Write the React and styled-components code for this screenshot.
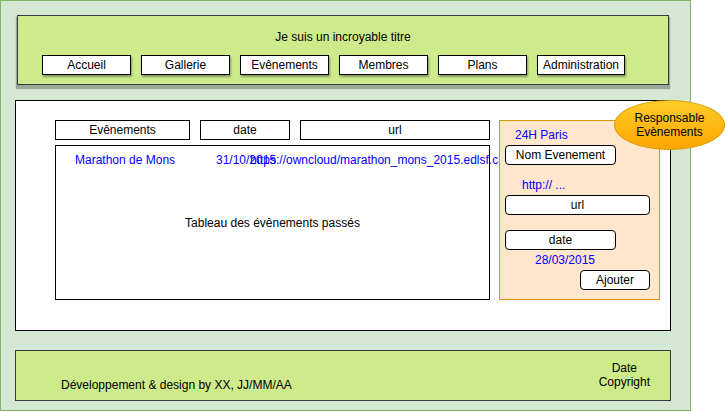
import React from "react";
import styled, { createGlobalStyle } from "styled-components";

const Global = createGlobalStyle`
  html, body { margin: 0; padding: 0; background: #ffffff; }
  body { font-family: "Liberation Sans", Arial, Helvetica, sans-serif; font-size: 12px; color: #000; }
  * { box-sizing: border-box; }
`;

const Frame = styled.div`
  width: 691px;
  height: 411px;
  border: 1px solid #82b366;
  background: #d5e8d4;
  padding: 14px 19px 0 14px;
  display: flex;
  flex-direction: column;
`;

const Header = styled.header`
  height: 70px;
  margin: 0 2px 0 2px;
  border: 1px solid #36393d;
  background: #cdeb8b;
  box-shadow: 0 3px 1px 1px rgba(0, 0, 0, 0.28);
  padding: 14px 0 0 24px;
  display: flex;
  flex-direction: column;
`;

const Title = styled.div`
  line-height: 14px;
  text-align: center;
  padding-right: 24px;
`;

const Nav = styled.nav`
  margin-top: 11px;
  display: flex;
  gap: 10px;
`;

const NavButton = styled.div`
  width: ${(p) => p.$w || 89}px;
  height: 20px;
  background: #ffffff;
  border: 1px solid #000;
  box-shadow: 1px 2px 2px rgba(0, 0, 0, 0.35);
  display: flex;
  align-items: center;
  justify-content: center;
  line-height: 14px;
`;

const Main = styled.main`
  position: relative;
  margin-top: 15px;
  height: 231px;
  border: 1px solid #000;
  background: #ffffff;
  padding: 19px 0 0 39px;
  display: flex;
  gap: 9px;
  align-items: flex-start;
`;

const LeftCol = styled.div`
  width: 435px;
  display: flex;
  flex-direction: column;
  gap: 5px;
`;

const ColHeaders = styled.div`
  display: flex;
  gap: 10px;
`;

const ColHeader = styled.div`
  width: ${(p) => p.$w}px;
  height: 20px;
  border: 1px solid #000;
  background: #fff;
  display: flex;
  align-items: center;
  justify-content: center;
  line-height: 14px;
`;

const Table = styled.div`
  height: 155px;
  border: 1px solid #000;
  background: #fff;
  padding: 7px 0 0 19px;
  display: flex;
  flex-direction: column;
`;

const Row = styled.div`
  display: flex;
  line-height: 14px;
  color: #0000ff;
  white-space: nowrap;
`;

const Cell = styled.span`
  flex: 0 0 ${(p) => (p.$w ? `${p.$w}px` : "auto")};
  min-width: 0;
  overflow: visible;
`;

const Caption = styled.div`
  margin-top: 49px;
  margin-left: -19px;
  text-align: center;
  line-height: 14px;
`;

const Panel = styled.aside`
  position: relative;
  z-index: 1;
  width: 161px;
  height: 180px;
  border: 1px solid #d79b00;
  background: #ffe6cc;
  padding: 7px 0 0 5px;
  display: flex;
  flex-direction: column;
  align-items: flex-start;
`;

const BlueText = styled.div`
  color: #0000ff;
  line-height: 14px;
  margin-top: ${(p) => p.$mt || 0}px;
  margin-left: ${(p) => p.$ml || 0}px;
  width: ${(p) => (p.$w ? `${p.$w}px` : "auto")};
  text-align: ${(p) => p.$align || "left"};
`;

const Field = styled.div`
  width: ${(p) => p.$w}px;
  height: 20px;
  margin-top: ${(p) => p.$mt || 0}px;
  margin-left: ${(p) => p.$ml || 0}px;
  border: 1px solid #000;
  border-radius: 4px;
  background: #ffffff;
  display: flex;
  align-items: center;
  justify-content: center;
  line-height: 14px;
`;

const Badge = styled.div`
  position: absolute;
  left: 598px;
  top: -1px;
  width: 111px;
  height: 50px;
  border-radius: 50%;
  border: 1px solid #d79b00;
  background: linear-gradient(to bottom, #ffcd28, #ffa500);
  z-index: 2;
  display: flex;
  flex-direction: column;
  align-items: center;
  justify-content: center;
  line-height: 14px;
  text-align: center;
`;

const Footer = styled.footer`
  margin-top: 19px;
  height: 51px;
  border: 1px solid #36393d;
  background: #cdeb8b;
  display: flex;
  justify-content: space-between;
  padding: 0 20px 0 45px;
`;

const Credits = styled.div`
  align-self: flex-end;
  padding-bottom: 8px;
  line-height: 14px;
`;

const Copy = styled.div`
  align-self: flex-start;
  padding-top: 10px;
  line-height: 14px;
  text-align: center;
`;

const navItems = [
  ["Accueil", 89],
  ["Gallerie", 89],
  ["Evênements", 89],
  ["Membres", 89],
  ["Plans", 89],
  ["Administration", 88],
];

export default function App() {
  return (
    <>
      <Global />
      <Frame>
        <Header>
          <Title>Je suis un incroyable titre</Title>
          <Nav>
            {navItems.map(([label, w]) => (
              <NavButton key={label} $w={w}>
                {label}
              </NavButton>
            ))}
          </Nav>
        </Header>

        <Main>
          <LeftCol>
            <ColHeaders>
              <ColHeader $w={135}>Evênements</ColHeader>
              <ColHeader $w={90}>date</ColHeader>
              <ColHeader $w={190}>url</ColHeader>
            </ColHeaders>
            <Table>
              <Row>
                <Cell $w={141}>Marathon de Mons</Cell>
                <Cell $w={34}>31/10/2015</Cell>
                <Cell>https://owncloud/marathon_mons_2015.edlsf.c</Cell>
              </Row>
              <Caption>Tableau des évênements passés</Caption>
            </Table>
          </LeftCol>

          <Panel>
            <BlueText $ml={10}>24H Paris</BlueText>
            <Field $w={111} $mt={3}>Nom Evenement</Field>
            <BlueText $ml={17} $mt={13}>http:// ...</BlueText>
            <Field $w={145} $mt={3}>url</Field>
            <Field $w={111} $mt={15}>date</Field>
            <BlueText $mt={3} $w={120} $align="center">28/03/2015</BlueText>
            <Field $w={70} $mt={3} $ml={75}>Ajouter</Field>
          </Panel>

          <Badge>
            <span>Responsable</span>
            <span>Evènements</span>
          </Badge>
        </Main>

        <Footer>
          <Credits>Développement &amp; design by XX, JJ/MM/AA</Credits>
          <Copy>
            Date
            <br />
            Copyright
          </Copy>
        </Footer>
      </Frame>
    </>
  );
}
